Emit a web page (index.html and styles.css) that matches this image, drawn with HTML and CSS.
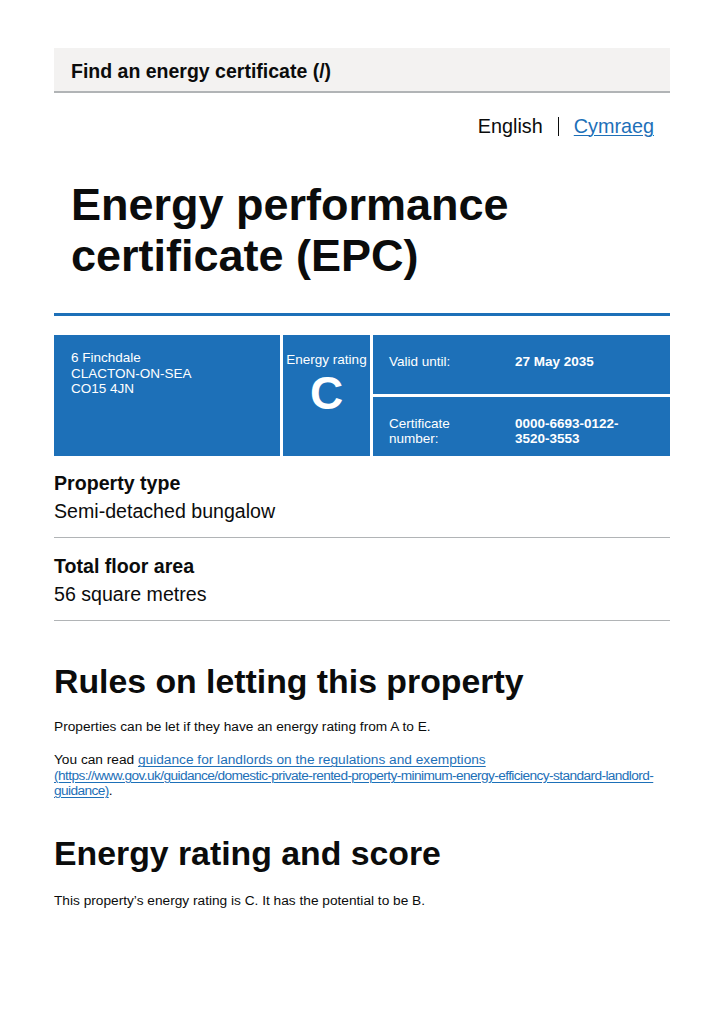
FILE: index.html
```html
<!DOCTYPE html>
<html lang="en">
<head>
<meta charset="utf-8">
<title>Energy performance certificate (EPC)</title>
<link rel="stylesheet" href="styles.css">
</head>
<body>
<div class="page">
  <header class="service-bar">
    <span class="service-name">Find an energy certificate (/)</span>
  </header>
  <nav class="lang">
    <span class="lang-current">English</span>
    <span class="lang-sep"></span>
    <a class="link" href="#">Cymraeg</a>
  </nav>
  <h1 class="title">Energy performance certificate (EPC)</h1>
  <hr class="blue-rule">
  <section class="summary">
    <div class="cell address">6 Finchdale<br>CLACTON-ON-SEA<br>CO15 4JN</div>
    <div class="cell rating">
      <span class="rating-label">Energy rating</span>
      <span class="rating-letter">C</span>
    </div>
    <div class="cell meta meta-top">
      <span class="meta-key">Valid until:</span>
      <span class="meta-val">27 May 2035</span>
    </div>
    <div class="cell meta meta-bottom">
      <span class="meta-key">Certificate number:</span>
      <span class="meta-val">0000-6693-0122-3520-3553</span>
    </div>
  </section>
  <dl class="facts">
    <div class="fact">
      <dt>Property type</dt>
      <dd>Semi-detached bungalow</dd>
    </div>
    <div class="fact">
      <dt>Total floor area</dt>
      <dd>56 square metres</dd>
    </div>
  </dl>
  <h2 class="heading">Rules on letting this property</h2>
  <p class="body">Properties can be let if they have an energy rating from A to E.</p>
  <p class="body">You can read <a class="link" href="#">guidance for landlords on the regulations and exemptions <span class="url">(https://www.gov.uk/guidance/domestic-private-rented-property-minimum-energy-efficiency-standard-landlord-guidance)</span></a>.</p>
  <h2 class="heading heading-2">Energy rating and score</h2>
  <p class="body body-last">This property’s energy rating is C. It has the potential to be B.</p>
</div>
</body>
</html>
```
FILE: styles.css
```css
* { box-sizing: border-box; }
html, body { margin: 0; padding: 0; background: #fff; }
body {
  font-family: "Liberation Sans", Arial, Helvetica, sans-serif;
  color: #0b0c0c;
}
.page {
  width: 616px;
  margin: 48px 0 0 54px;
}
.service-bar {
  background: #f3f2f1;
  border-bottom: 2px solid #b1b4b6;
  height: 45px;
  padding: 4px 17px 0;
  display: flex;
  align-items: center;
}
.service-name {
  font-weight: 700;
  font-size: 19.5px;
  color: #0b0c0c;
}
.lang {
  display: flex;
  justify-content: flex-end;
  align-items: center;
  padding: 0 16px 0 0;
  margin-top: 22px;
  font-size: 19.8px;
  height: 22px;
}
.lang-sep {
  width: 1px;
  height: 19px;
  background: #0b0c0c;
  margin: 0 15px;
}
.link { color: #1d70b8; text-decoration: underline; text-underline-offset: 2px; text-decoration-thickness: 1px; }
.url { letter-spacing: -0.6px; }
.title {
  margin: 42px 0 0 0;
  padding: 0 17px;
  font-size: 45px;
  line-height: 51px;
  font-weight: 700;
  color: #0b0c0c;
}
.blue-rule {
  border: 0;
  height: 3px;
  background: #1d70b8;
  margin: 32px 0 0 0;
}
.summary {
  margin-top: 19px;
  display: grid;
  grid-template-columns: 226px 87px 1fr;
  grid-template-rows: 59px 59px;
  gap: 3px;
  color: #fff;
  font-size: 13.5px;
  line-height: 15.5px;
}
.cell { background: #1d70b8; }
.address {
  grid-row: 1 / 3;
  padding: 15px 17px;
}
.rating {
  grid-row: 1 / 3;
  display: flex;
  flex-direction: column;
  align-items: center;
  padding-top: 17px;
}
.rating-letter {
  font-size: 46px;
  line-height: 46px;
  font-weight: 700;
  margin-top: 2px;
}
.meta {
  display: grid;
  grid-template-columns: 126px 1fr;
  padding: 0 40px 0 16px;
  align-items: center;
}
.meta-top { padding-bottom: 5px; }
.meta-bottom { padding-top: 9px; }
.meta-key { padding-right: 20px; }
.meta-val { font-weight: 700; }
.facts { margin: 12px 0 0 0; }
.fact {
  border-bottom: 1px solid #b1b4b6;
  padding: 14px 0 12px;
}
.fact:first-child { padding-top: 1px; }
.fact dt {
  font-weight: 700;
  font-size: 19.6px;
  line-height: 28px;
}
.fact dd {
  margin: 0;
  font-size: 19.6px;
  line-height: 28px;
}
.heading {
  margin: 40px 0 0 0;
  font-size: 33.8px;
  line-height: 40px;
  font-weight: 700;
}
.heading-2 { margin-top: 35px; }
.body {
  font-size: 13.7px;
  line-height: 15.3px;
  margin: 24px 0 0 0;
}
.heading + .body { margin-top: 18px; }
.body + .body { margin-top: 18px; }
.heading-2 + .body { margin-top: 20px; }
```
